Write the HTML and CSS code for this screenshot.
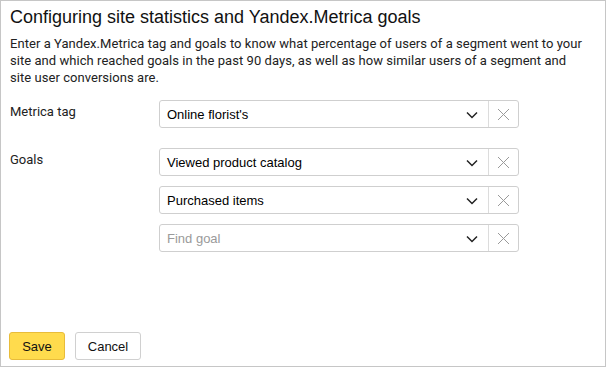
FILE: index.html
```html
<!DOCTYPE html>
<html lang="en">
<head>
  <meta charset="UTF-8" />
  <title>Site statistics</title>
  <link rel="stylesheet" href="styles.css">
</head>
<body>
  <div class="dialog">
    <h1 class="title">Configuring site statistics and Yandex.Metrica goals</h1>
    <p class="intro">Enter a Yandex.Metrica tag and goals to know what percentage of users of a segment went to your site and which reached goals in the past 90 days, as well as how similar users of a segment and site user conversions are.</p>

    <div class="row row-tag">
      <div class="label">Metrica tag</div>
      <div class="fields">
        <div class="select">
          <span class="value">Online florist's</span>
          <span class="arrow"><svg width="12" height="8" viewBox="0 0 12 8"><path d="M1 1.5 L6 6.5 L11 1.5" fill="none" stroke="#222" stroke-width="1.5"/></svg></span>
          <span class="clear"><svg width="13" height="13" viewBox="0 0 13 13"><path d="M1 1 L12 12 M12 1 L1 12" stroke="#9a9a9a" stroke-width="1"/></svg></span>
        </div>
      </div>
    </div>

    <div class="row row-goals">
      <div class="label">Goals</div>
      <div class="fields">
        <div class="select">
          <span class="value">Viewed product catalog</span>
          <span class="arrow"><svg width="12" height="8" viewBox="0 0 12 8"><path d="M1 1.5 L6 6.5 L11 1.5" fill="none" stroke="#222" stroke-width="1.5"/></svg></span>
          <span class="clear"><svg width="13" height="13" viewBox="0 0 13 13"><path d="M1 1 L12 12 M12 1 L1 12" stroke="#9a9a9a" stroke-width="1"/></svg></span>
        </div>
        <div class="select">
          <span class="value">Purchased items</span>
          <span class="arrow"><svg width="12" height="8" viewBox="0 0 12 8"><path d="M1 1.5 L6 6.5 L11 1.5" fill="none" stroke="#222" stroke-width="1.5"/></svg></span>
          <span class="clear"><svg width="13" height="13" viewBox="0 0 13 13"><path d="M1 1 L12 12 M12 1 L1 12" stroke="#9a9a9a" stroke-width="1"/></svg></span>
        </div>
        <div class="select">
          <span class="value placeholder">Find goal</span>
          <span class="arrow"><svg width="12" height="8" viewBox="0 0 12 8"><path d="M1 1.5 L6 6.5 L11 1.5" fill="none" stroke="#222" stroke-width="1.5"/></svg></span>
          <span class="clear"><svg width="13" height="13" viewBox="0 0 13 13"><path d="M1 1 L12 12 M12 1 L1 12" stroke="#9a9a9a" stroke-width="1"/></svg></span>
        </div>
      </div>
    </div>

    <div class="footer">
      <button class="btn btn-save">Save</button>
      <button class="btn btn-cancel">Cancel</button>
    </div>
  </div>
</body>
</html>
```

FILE: styles.css
```css
body {
  margin: 0;
  background: #fff;
}
.dialog {
  box-sizing: border-box;
  width: 606px;
  height: 367px;
  border: 1px solid #c6c6c6;
  padding: 0 9px;
  display: flex;
  flex-direction: column;
  font-family: Roboto, sans-serif;
  color: #222;
}
.title {
  margin: 5px 0 0;
  font-family: 'Liberation Sans', Arial, sans-serif;
  font-weight: normal;
  font-size: 18px;
  line-height: 22px;
  color: #111;
}
.intro {
  max-width: 574px;
  margin: 7px 0 0;
  font-size: 13px;
  line-height: 17px;
  letter-spacing: 0.05px;
}
.row {
  display: flex;
}
.row-tag {
  margin-top: 14px;
}
.row-goals {
  margin-top: 20px;
}
.label {
  width: 149px;
  font-size: 13px;
  line-height: 17px;
  padding-top: 3px;
}
.fields {
  display: flex;
  flex-direction: column;
  gap: 10px;
}
.select {
  box-sizing: border-box;
  width: 360px;
  height: 28px;
  border: 1px solid #cfcfcf;
  border-radius: 3px;
  display: flex;
  align-items: center;
  font-family: 'Liberation Sans', Arial, sans-serif;
  font-size: 13px;
  color: #000;
}
.value {
  flex: 1;
  padding-left: 7px;
}
.placeholder {
  color: #9a9a9a;
}
.arrow {
  width: 22px;
  display: flex;
  justify-content: flex-start;
  padding-top: 2px;
}
.clear {
  width: 29px;
  height: 100%;
  border-left: 1px solid #dcdcdc;
  display: flex;
  align-items: center;
  justify-content: center;
}
.footer {
  margin: auto 0 6px -1px;
  display: flex;
  gap: 10px;
}
.btn {
  height: 28px;
  box-sizing: border-box;
  border-radius: 3px;
  font-family: 'Liberation Sans', Arial, sans-serif;
  font-size: 13px;
  color: #111;
  padding: 0 10px;
}
.btn-save {
  width: 56px;
  background: #ffdb4d;
  border: 1px solid #e8bc3a;
}
.btn-cancel {
  width: 66px;
  background: #fff;
  border: 1px solid #d0d0d0;
}
```
